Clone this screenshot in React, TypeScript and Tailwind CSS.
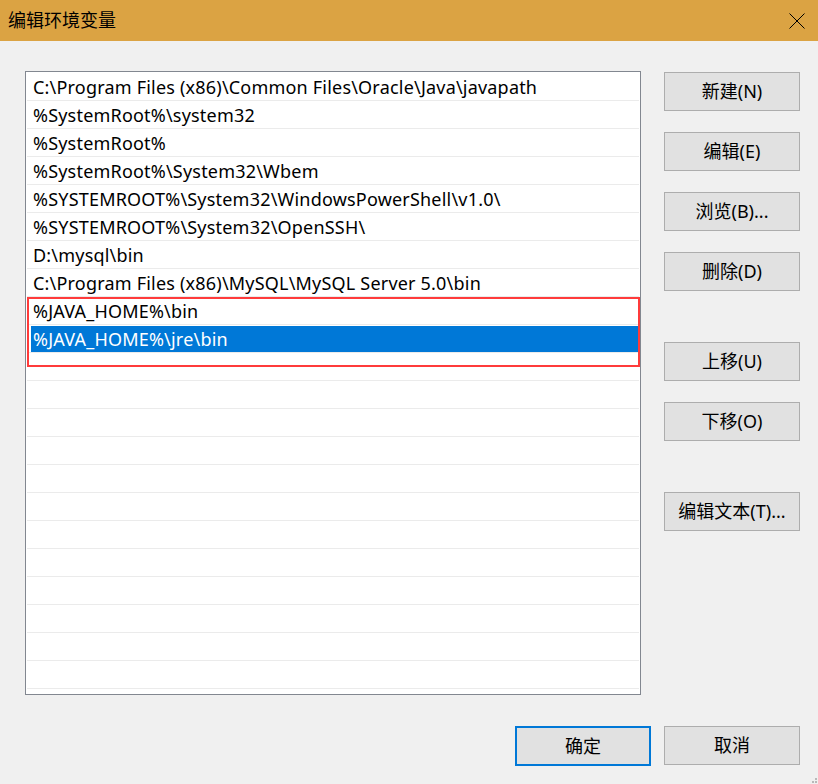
import React from 'react';

const paths = [
  'C:\\Program Files (x86)\\Common Files\\Oracle\\Java\\javapath',
  '%SystemRoot%\\system32',
  '%SystemRoot%',
  '%SystemRoot%\\System32\\Wbem',
  '%SYSTEMROOT%\\System32\\WindowsPowerShell\\v1.0\\',
  '%SYSTEMROOT%\\System32\\OpenSSH\\',
  'D:\\mysql\\bin',
  'C:\\Program Files (x86)\\MySQL\\MySQL Server 5.0\\bin',
  '%JAVA_HOME%\\bin',
  '%JAVA_HOME%\\jre\\bin',
];

const font = { fontFamily: '"Noto Sans", "Noto Sans CJK SC", sans-serif' };

function Btn({ label, primary }: { label: string; primary?: boolean }) {
  return (
    <div
      className={
        'w-[136px] flex items-center justify-center bg-[#e1e1e1] text-[18px] text-black ' +
        (primary ? 'h-[40px] border-2 border-[#0078d7]' : 'h-[39px] border border-[#adadad]')
      }
    >
      {label}
    </div>
  );
}

export default function App() {
  const empty = Array.from({ length: 13 });
  return (
    <div className="w-[818px] h-[784px] bg-[#f0f0f0] flex flex-col relative overflow-hidden" style={font}>
      {/* title bar */}
      <div className="h-[41px] bg-[#dba343] flex items-center justify-between pl-[8px] pr-[13px] shrink-0">
        <span className="text-[18px] text-black">编辑环境变量</span>
        <svg width="16" height="16" viewBox="0 0 16 16">
          <path d="M0.5 0.5L15.5 15.5M15.5 0.5L0.5 15.5" stroke="#000" strokeWidth="1" />
        </svg>
      </div>

      <div className="flex pl-[25px] pt-[30px]">
        {/* list */}
        <div className="relative w-[616px] h-[624px] bg-white border border-[#828790] p-[1px] overflow-hidden">
          {paths.map((p, i) => (
            <div key={i} className="h-[28px] border-b border-[#ebebeb] flex">
              <div
                className={
                  'flex-1 ml-[4px] mr-[1px] mt-[1px] flex items-center pl-[2px] text-[18px] tracking-[0.2px] leading-none ' +
                  (i === 9 ? 'bg-[#0078d7] text-white' : 'text-black')
                }
              >
                {p}
              </div>
            </div>
          ))}
          {empty.map((_, i) => (
            <div key={'e' + i} className="h-[28px] border-b border-[#ebebeb]" />
          ))}
          <div className="absolute left-[1px] top-[225px] w-[613px] h-[70px] border-2 border-[#ff3b3b]" />
        </div>

        {/* right buttons */}
        <div className="ml-[23px] pt-[1px] flex flex-col">
          <Btn label="新建(N)" />
          <div className="h-[21px]" />
          <Btn label="编辑(E)" />
          <div className="h-[21px]" />
          <Btn label="浏览(B)..." />
          <div className="h-[21px]" />
          <Btn label="删除(D)" />
          <div className="h-[51px]" />
          <Btn label="上移(U)" />
          <div className="h-[21px]" />
          <Btn label="下移(O)" />
          <div className="h-[51px]" />
          <Btn label="编辑文本(T)..." />
        </div>
      </div>

      {/* bottom buttons */}
      <div className="flex justify-end gap-[13px] pr-[18px] mt-[31px]">
        <Btn label="确定" primary />
        <Btn label="取消" />
      </div>

      <div className="absolute right-[1px] bottom-[1px] grid grid-cols-2 gap-[1px]">
        <div className="w-[2px] h-[2px]" />
        <div className="w-[2px] h-[2px] bg-[#b9b9b9]" />
        <div className="w-[2px] h-[2px] bg-[#b9b9b9]" />
        <div className="w-[2px] h-[2px] bg-[#b9b9b9]" />
      </div>
    </div>
  );
}
